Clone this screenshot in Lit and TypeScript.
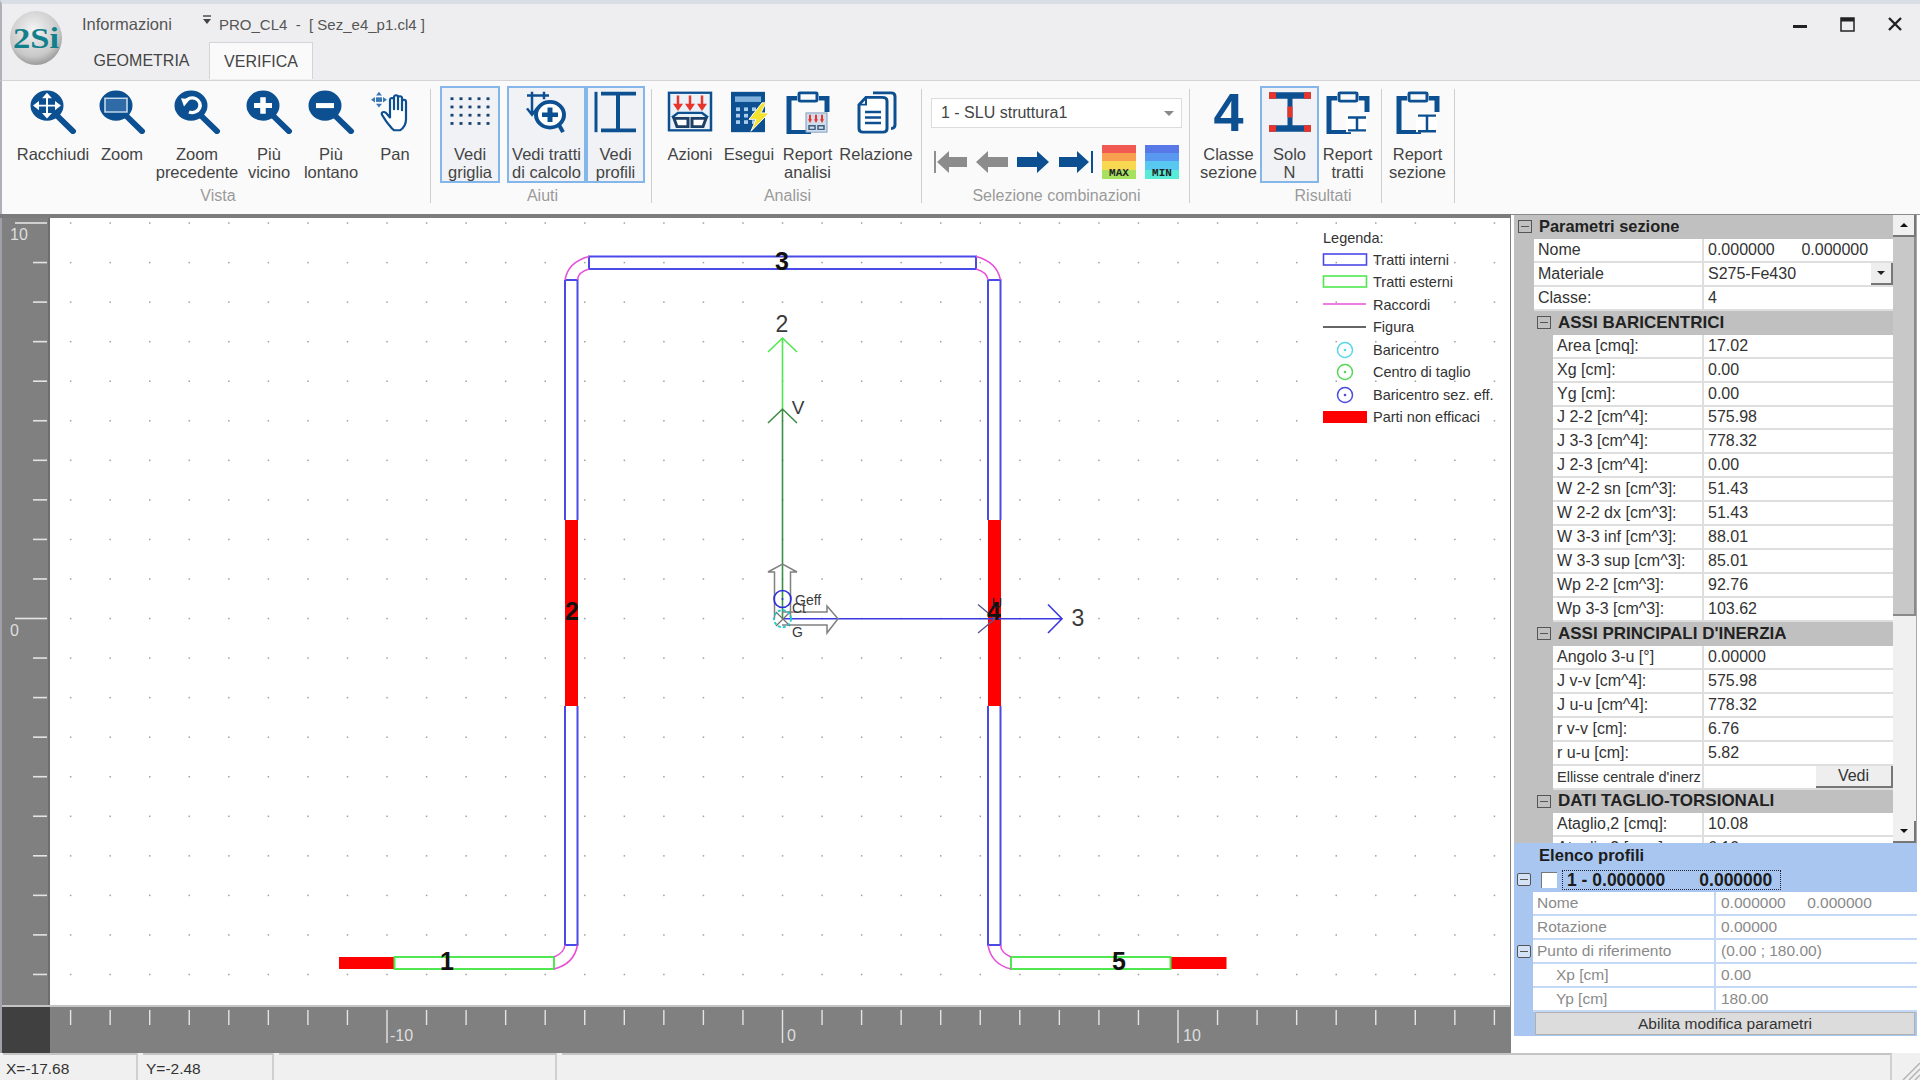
import { LitElement, html, css, svg } from 'lit';
import { customElement } from 'lit/decorators.js';

const BLUE = '#0c5092';
const RED = '#e8352c';

const glass = (inner: unknown) => svg`
  <circle cx="18" cy="17" r="16.5" fill="${BLUE}"/>
  <line x1="29" y1="29" x2="44" y2="45" stroke="${BLUE}" stroke-width="6" stroke-linecap="round"/>
  ${inner}`;

const clipboard = (inner: unknown) => svg`
  <path d="M13 9H5V46H27" fill="none" stroke="${BLUE}" stroke-width="5"/>
  <path d="M35 9H43V24" fill="none" stroke="${BLUE}" stroke-width="5"/>
  <rect x="15" y="3" width="18" height="9" rx="1" fill="none" stroke="${BLUE}" stroke-width="3"/>
  ${inner}`;

const beam = (x: number, y: number, w: number, h: number, color: string) => svg`
  <path d="M${x} ${y}H${x + w}M${x} ${y + h}H${x + w}M${x + w / 2} ${y}V${y + h}" fill="none" stroke="${color}" stroke-width="2.5"/>`;

const ICONS: Record<string, unknown> = {
  fit: glass(svg`
    <path d="M18 6V28M7 17H29" stroke="#fff" stroke-width="2"/>
    <path d="M18 3L13 9H23ZM18 31L13 25H23ZM4 17L10 12V22ZM32 17L26 12V22Z" fill="#fff"/>`),
  zoom: glass(svg`<rect x="7" y="9" width="22" height="15" fill="#2f6ba6" stroke="#cfe0f0" stroke-width="1.5"/>`),
  prev: glass(svg`
    <path d="M12 13A8 8 0 1 1 16 24" fill="none" stroke="#fff" stroke-width="3.5"/>
    <path d="M8 9L17 10L11 18Z" fill="#fff"/>`),
  plus: glass(svg`<path d="M18 8V26M9 17H27" stroke="#fff" stroke-width="5.5"/>`),
  minus: glass(svg`<path d="M9 17H27" stroke="#fff" stroke-width="5.5"/>`),
  pan: svg`
    <path d="M21 42C16 36 13 31 11 27C10 24 13 23 15 25L19 30V11C19 8 23 8 23 11V21V8C23 5 27 5 27 8V21V9C27 6 31 6 31 9V22V13C31 10 35 10 35 13V32C35 38 32 42 29 44H23Z" fill="#fff" stroke="${BLUE}" stroke-width="2.2" stroke-linejoin="round"/>
    <path d="M8 2L5 6H11ZM8 19L5 15H11ZM0 10.5L4 7.5V13.5ZM16 10.5L12 7.5V13.5Z" fill="#3a78b5"/>
    <rect x="5" y="8" width="6" height="5" fill="#3a78b5"/>`,
  grid: svg`${[6, 15, 24, 33].map((y) =>
    [6, 15, 24, 33, 42].map((x) => svg`<rect x="${x - 1.5}" y="${y + 2}" width="3" height="3" fill="#17426f"/>`))}`,
  segs: svg`
    <path d="M4 6H26M9 2V10M21 2V10M9 10V26M4 20L9 27L14 20" fill="none" stroke="${BLUE}" stroke-width="2.5"/>
    <circle cx="27" cy="27" r="14" fill="#fff" stroke="${BLUE}" stroke-width="4"/>
    <path d="M27 19V35M19 27H35" stroke="${BLUE}" stroke-width="5"/>
    <line x1="36" y1="38" x2="40" y2="46" stroke="${BLUE}" stroke-width="4"/>`,
  prof: svg`
    <path d="M4 2V46" stroke="${BLUE}" stroke-width="3"/>
    <path d="M9 4H44M9 44H44" stroke="${BLUE}" stroke-width="4"/>
    <path d="M26 4V44" stroke="${BLUE}" stroke-width="4"/>`,
  act: svg`
    <rect x="3" y="3" width="42" height="41" fill="#eaf1f8" stroke="${BLUE}" stroke-width="2.5"/>
    <path d="M12 6V17M24 6V17M36 6V17" stroke="${RED}" stroke-width="2.5"/>
    <path d="M7 15L12 23L17 15ZM19 15L24 23L29 15ZM31 15L36 23L41 15Z" fill="${RED}"/>
    <path d="M6 30L12 25H36L42 30" fill="none" stroke="${BLUE}" stroke-width="2.5"/>
    <path d="M8 31H22V40H11ZM26 31H40L37 40H26Z" fill="#fff" stroke="#1d3f66" stroke-width="3"/>`,
  calc: svg`
    <rect x="6" y="2" width="34" height="44" fill="${BLUE}"/>
    <rect x="10" y="7" width="26" height="6" fill="#7fb0dc"/>
    ${[19, 26, 33].map((y) => [11, 19, 27].map((x) => svg`<rect x="${x}" y="${y}" width="4" height="4" fill="#a9cdee"/>`))}
    <path d="M37 14L24 32H31L26 45L44 25H36L41 14Z" fill="#f4e22f" stroke="#fff" stroke-width="1"/>`,
  rep: clipboard(svg`
    <rect x="22" y="25" width="21" height="21" fill="#cfdded" stroke="#7d9cbc"/>
    <path d="M26 27V33M32 27V33M38 27V33" stroke="${RED}" stroke-width="2"/>
    <path d="M24 32L26 36L28 32ZM30 32L32 36L34 32ZM36 32L38 36L40 32Z" fill="${RED}"/>
    <path d="M25 39H31V43H25ZM34 39H40V43H34Z" fill="none" stroke="#405e80" stroke-width="1.5"/>`),
  doc: svg`
    <path d="M21 3H39Q43 3 43 7V38Q43 42 39 42" fill="none" stroke="${BLUE}" stroke-width="3"/>
    <path d="M14 8H30Q35 8 35 12V42Q35 46 31 46H11Q7 46 7 42V16Z" fill="#fff" stroke="${BLUE}" stroke-width="3"/>
    <path d="M14 8V16H7" fill="none" stroke="${BLUE}" stroke-width="2"/>
    <path d="M13 24H29M13 30H29M13 36H29" stroke="${BLUE}" stroke-width="2.5"/>`,
  soloN: svg`
    <path d="M3 6H45M3 42H45" stroke="${BLUE}" stroke-width="7"/>
    <path d="M24 6V42" stroke="${BLUE}" stroke-width="5"/>
    <path d="M3 6H10M38 6H45M3 42H10M38 42H45" stroke="${RED}" stroke-width="7"/>
    <path d="M24 18V30" stroke="${RED}" stroke-width="5"/>`,
  repT: clipboard(svg`
    <rect x="22" y="25" width="21" height="21" fill="#fff"/>
    ${beam(24, 30, 18, 14, BLUE)}
    <path d="M35 14V22" stroke="#fff" stroke-width="2"/>`),
  repS: clipboard(svg`
    <rect x="22" y="25" width="21" height="21" fill="#fff"/>
    ${beam(24, 28, 18, 17, BLUE)}`),
};

interface RibbonBtn {
  icon?: string;
  lines: string[];
  w: number;
  active?: boolean;
}

const GROUPS: { label: string; w: number; btns: RibbonBtn[] }[] = [
  {
    label: 'Vista',
    w: 410,
    btns: [
      { icon: 'fit', lines: ['Racchiudi'], w: 80 },
      { icon: 'zoom', lines: ['Zoom'], w: 58 },
      { icon: 'prev', lines: ['Zoom', 'precedente'], w: 92 },
      { icon: 'plus', lines: ['Più', 'vicino'], w: 52 },
      { icon: 'minus', lines: ['Più', 'lontano'], w: 72 },
      { icon: 'pan', lines: ['Pan'], w: 56 },
    ],
  },
  {
    label: 'Aiuti',
    w: 205,
    btns: [
      { icon: 'grid', lines: ['Vedi', 'griglia'], w: 60, active: true },
      { lines: [], w: 7 },
      { icon: 'segs', lines: ['Vedi tratti', 'di calcolo'], w: 79, active: true },
      { icon: 'prof', lines: ['Vedi', 'profili'], w: 59, active: true },
    ],
  },
  {
    label: 'Analisi',
    w: 255,
    btns: [
      { icon: 'act', lines: ['Azioni'], w: 60 },
      { icon: 'calc', lines: ['Esegui'], w: 58 },
      { icon: 'rep', lines: ['Report', 'analisi'], w: 59 },
      { icon: 'doc', lines: ['Relazione'], w: 78 },
    ],
  },
];

const RESULT_BTNS: RibbonBtn[] = [
  { icon: 'soloN', lines: ['Solo', 'N'], w: 59, active: true },
  { icon: 'repT', lines: ['Report', 'tratti'], w: 57 },
];

type Row =
  | { head: string; level: 0 | 1 }
  | { name: string; value: string; level: 0 | 1; combo?: boolean; button?: boolean };

const ROWS: Row[] = [
  { head: 'Parametri sezione', level: 0 },
  { name: 'Nome', value: '0.000000\u00a0\u00a0\u00a0\u00a0\u00a0\u00a00.000000', level: 0 },
  { name: 'Materiale', value: 'S275-Fe430', level: 0, combo: true },
  { name: 'Classe:', value: '4', level: 0 },
  { head: 'ASSI BARICENTRICI', level: 1 },
  { name: 'Area [cmq]:', value: '17.02', level: 1 },
  { name: 'Xg [cm]:', value: '0.00', level: 1 },
  { name: 'Yg [cm]:', value: '0.00', level: 1 },
  { name: 'J 2-2 [cm^4]:', value: '575.98', level: 1 },
  { name: 'J 3-3 [cm^4]:', value: '778.32', level: 1 },
  { name: 'J 2-3 [cm^4]:', value: '0.00', level: 1 },
  { name: 'W 2-2 sn [cm^3]:', value: '51.43', level: 1 },
  { name: 'W 2-2 dx [cm^3]:', value: '51.43', level: 1 },
  { name: 'W 3-3 inf [cm^3]:', value: '88.01', level: 1 },
  { name: 'W 3-3 sup [cm^3]:', value: '85.01', level: 1 },
  { name: 'Wp 2-2 [cm^3]:', value: '92.76', level: 1 },
  { name: 'Wp 3-3 [cm^3]:', value: '103.62', level: 1 },
  { head: "ASSI PRINCIPALI D'INERZIA", level: 1 },
  { name: 'Angolo 3-u [°]', value: '0.00000', level: 1 },
  { name: 'J v-v [cm^4]:', value: '575.98', level: 1 },
  { name: 'J u-u [cm^4]:', value: '778.32', level: 1 },
  { name: 'r v-v [cm]:', value: '6.76', level: 1 },
  { name: 'r u-u [cm]:', value: '5.82', level: 1 },
  { name: "Ellisse centrale d'inerz", value: '', level: 1, button: true },
  { head: 'DATI TAGLIO-TORSIONALI', level: 1 },
  { name: 'Ataglio,2 [cmq]:', value: '10.08', level: 1 },
  { name: 'Ataglio,3 [cmq]:', value: '6.10', level: 1 },
];

const PROFILE_ROWS = [
  { name: 'Nome', value: '0.000000\u00a0\u00a0\u00a0\u00a0\u00a00.000000' },
  { name: 'Rotazione', value: '0.00000' },
  { name: 'Punto di riferimento', value: '(0.00 ; 180.00)', toggle: true },
  { name: 'Xp [cm]', value: '0.00', indent: true },
  { name: 'Yp [cm]', value: '180.00', indent: true },
];

// drawing scale: 39.55 px per unit, origin in page coordinates
const OX = 782.5;
const OY = 618.5;
const STEP = 39.55;
const range = (a: number, b: number) => Array.from({ length: b - a + 1 }, (_, i) => a + i);

const FONT = 'Liberation Sans';

function drawing() {
  const dots = range(-18, 18).flatMap((i) =>
    range(-10, 9).map((j) => svg`<rect x="${OX + i * STEP - 0.7}" y="${OY + j * STEP - 0.7}" width="1.5" height="1.5" fill="#a0a0a0"/>`)
  );
  const leftTicks = range(-10, 9).map((j) => {
    const long = j % 10 === 0;
    return svg`<line x1="${long ? 15 : 33}" x2="47" y1="${OY + j * STEP}" y2="${OY + j * STEP}" stroke="#e4e4e4" stroke-width="1.6"/>`;
  });
  const bottomTicks = range(-18, 18).map((i) => {
    const long = i % 10 === 0;
    return svg`<line x1="${OX + i * STEP}" x2="${OX + i * STEP}" y1="1010" y2="${long ? 1043 : 1025}" stroke="#e4e4e4" stroke-width="1.4"/>`;
  });
  const purple = '#4a4ae8';
  const green = '#50e850';
  const mag = '#e850d8';
  const lab = (x: number, y: number, t: string) =>
    svg`<text x="${x}" y="${y}" text-anchor="middle" font-family="${FONT}" font-size="25" font-weight="700" fill="#111">${t}</text>`;
  const axisLab = (x: number, y: number, t: string, size = 23) =>
    svg`<text x="${x}" y="${y}" text-anchor="middle" font-family="${FONT}" font-size="${size}" fill="#3a3a3a">${t}</text>`;
  const legendText = [
    ['Tratti interni', 260],
    ['Tratti esterni', 282],
    ['Raccordi', 305],
    ['Figura', 327],
    ['Baricentro', 350],
    ['Centro di taglio', 372],
    ['Baricentro sez. eff.', 395],
    ['Parti non efficaci', 417],
  ] as [string, number][];
  const target = (y: number, c: string) => svg`
    <circle cx="1345" cy="${y}" r="7.5" fill="none" stroke="${c}" stroke-width="1.5"/>
    <circle cx="1345" cy="${y}" r="1.3" fill="${c}"/>`;

  return svg`
    <rect x="0" y="216" width="1511" height="837" fill="#fff"/>
    ${dots}

    <rect x="2" y="216" width="48" height="790" fill="#808080"/>
    <rect x="48" y="216" width="2" height="790" fill="#6e6e6e"/>
    <rect x="0" y="216" width="2" height="837" fill="#a0a0a8"/>
    <rect x="2" y="1005" width="1508" height="2" fill="#c4c4c4"/>
    <rect x="50" y="1007" width="1460" height="46" fill="#808080"/>
    <rect x="2" y="1007" width="48" height="46" fill="#404040"/>
    <rect x="1510" y="216" width="1.5" height="837" fill="#808080"/>
    ${leftTicks}
    ${bottomTicks}
    <g font-family="${FONT}" font-size="16" fill="#dedede">
      <text x="10" y="240">10</text>
      <text x="10" y="636">0</text>
      <text x="390" y="1041">-10</text>
      <text x="787" y="1041">0</text>
      <text x="1183" y="1041">10</text>
    </g>

    <rect x="339" y="957" width="56" height="12" fill="#ff0000"/>
    <rect x="1170.5" y="957" width="56" height="12" fill="#ff0000"/>
    <rect x="565" y="520" width="13" height="186" fill="#ff0000"/>
    <rect x="988" y="520" width="13" height="186" fill="#ff0000"/>

    <g fill="none" stroke-width="2">
      <rect x="394.5" y="957" width="159.5" height="12" stroke="${green}"/>
      <rect x="1011" y="957" width="159.5" height="12" stroke="${green}"/>
      <rect x="589" y="256.5" width="387" height="12.5" stroke="${purple}"/>
      <path d="M565 280H577.5V520M565 280V520M577.5 706V945H565V706" stroke="${purple}"/>
      <path d="M988 280H1000.5V520M988 280V520M1000.5 706V945H988V706" stroke="${purple}"/>
      <path d="M565 280Q568 262 589 256.5M577.5 280Q578 272 589 269M1000.5 280Q997 262 976 256.5M988 280Q987 272 976 269
               M577.5 945Q574 964 554 969M565 945Q564 953 554 957M988 945Q991 964 1011 969M1000.5 945Q1001 953 1011 957"
        stroke="${mag}" stroke-width="1.6"/>
    </g>

    <path d="M782.5 409V338M768 352L782.5 338L797 352" fill="none" stroke="${green}" stroke-width="1.6"/>
    <path d="M782.5 618V409M768 423L782.5 409L797 423" fill="none" stroke="#3d8f46" stroke-width="1.6"/>
    <path d="M782.5 618.7H1062M1048 604.5L1062 618.7L1048 633" fill="none" stroke="#3a3ae0" stroke-width="1.6"/>
    <path d="M978 604.5L995 618.7L978 633" fill="none" stroke="#5a5a90" stroke-width="1.4"/>
    <path d="M774.5 618V572H768L782.5 564L797 572H790.5V618" fill="none" stroke="#808080" stroke-width="1.5"/>
    <path d="M782 612H827V606L838 618.7L827 633V625H782" fill="none" stroke="#808080" stroke-width="1.5"/>
    <path d="M776 612L790 626M790 612L776 626" stroke="#707070" stroke-width="1.2"/>
    <circle cx="782.5" cy="599" r="8.5" fill="none" stroke="#2a2ae0" stroke-width="1.6"/>
    <circle cx="782.5" cy="599" r="1" fill="#2a2ae0"/>
    <circle cx="782.5" cy="618.7" r="8.5" fill="none" stroke="#20c8c8" stroke-width="1.8" stroke-dasharray="3 2"/>
    ${lab(782, 270, '3')}
    ${lab(572, 620, '2')}
    ${lab(994, 620, '4')}
    ${lab(447, 970, '1')}
    ${lab(1119, 970, '5')}
    <text x="997" y="608" text-anchor="middle" font-family="${FONT}" font-size="15" fill="#222">U</text>
    ${axisLab(782, 332, '2')}
    ${axisLab(798, 414, 'V', 19)}
    ${axisLab(1078, 626, '3')}
    <g font-family="${FONT}" font-size="14" fill="#3a3a3a">
      <text x="795" y="605">Geff</text>
      <text x="792" y="613">Ct</text>
      <text x="792" y="637">G</text>
    </g>

    <g font-family="${FONT}" font-size="14.5" fill="#333">
      <text x="1323" y="243">Legenda:</text>
      ${legendText.map(([t, y]) => svg`<text x="1373" y="${y + 5}">${t}</text>`)}
    </g>
    <rect x="1323.5" y="254" width="43" height="11" fill="none" stroke="${purple}" stroke-width="1.6"/>
    <rect x="1323.5" y="276" width="43" height="11" fill="none" stroke="${green}" stroke-width="1.6"/>
    <line x1="1323" x2="1366" y1="304" y2="304" stroke="${mag}" stroke-width="1.6"/>
    <line x1="1323" x2="1366" y1="327" y2="327" stroke="#333" stroke-width="1.4"/>
    ${target(350, '#55d8e8')}
    ${target(372, '#55d855')}
    ${target(395, '#4a4ae0')}
    <rect x="1323" y="411" width="44" height="12" fill="#ff0000"/>
  `;
}

@customElement('app-root')
export class AppRoot extends LitElement {
  static styles = css`
    :host {
      display: flex;
      flex-direction: column;
      position: relative;
      width: 1920px;
      height: 1080px;
      overflow: hidden;
      background: #f0f0f0;
      font-family: 'Liberation Sans', Arial, sans-serif;
      color: #333;
    }

    /* title area */
    .title {
      flex: 0 0 80px;
      box-sizing: border-box;
      display: flex;
      flex-direction: column;
      background: #eeeef0;
      border-top: 4px solid #d9dde6;
      border-bottom: 1px solid #d4d4d6;
      border-left: 2px solid #b0b0b8;
    }
    .title-top {
      flex: 0 0 38px;
      box-sizing: border-box;
      display: flex;
      align-items: center;
      font-size: 15px;
      color: #555;
      padding: 2px 0 0 80px;
    }
    .logo {
      position: absolute;
      left: 8px;
      top: 8px;
      width: 56px;
      height: 60px;
    }
    .info {
      width: 119px;
      font-size: 16.5px;
    }
    .qat {
      display: block;
      width: 18px;
      height: 12px;
      margin-top: -6px;
    }
    .doc-name {
      flex: 1;
    }
    .win {
      display: flex;
      align-items: center;
      padding-right: 18px;
    }
    .win svg {
      display: block;
    }
    .win svg + svg {
      margin-left: 33px;
    }
    .tabs {
      flex: 1;
      display: flex;
      font-size: 16px;
      color: #444;
      padding-left: 72px;
    }
    .tab {
      box-sizing: border-box;
      width: 135px;
      text-align: center;
      line-height: 38px;
    }
    .tab.on {
      width: 104px;
      background: #fafafa;
      border: 1px solid #d4d4d6;
      border-bottom: none;
      height: 37px;
    }

    /* ribbon */
    .ribbon {
      flex: 0 0 133px;
      box-sizing: border-box;
      display: flex;
      background: #fafafa;
      padding: 5px 0 0 11px;
      border-left: 2px solid #b0b0b8;
    }
    .group {
      display: flex;
      flex-direction: column;
      align-items: stretch;
      flex: none;
    }
    .btns {
      display: flex;
      height: 97px;
    }
    .glabel {
      text-align: center;
      font-size: 16px;
      line-height: 25px;
      color: #9a9a9a;
    }
    .sep {
      flex: none;
      width: 1px;
      height: 114px;
      margin-top: 3px;
      background: #cfcfcf;
    }
    .btn {
      box-sizing: border-box;
      flex: none;
      display: flex;
      flex-direction: column;
      align-items: center;
      font-size: 16.5px;
      line-height: 18px;
      color: #444;
      border: 2px solid transparent;
      padding-top: 2px;
      white-space: nowrap;
    }
    .btn.on {
      background: #f0f2f6;
      border-color: #84b6ea;
    }
    .btn svg {
      flex: 0 0 44px;
      width: 48px;
      height: 44px;
      margin-bottom: 11px;
    }
    .btn.blank {
      border: none;
    }
    .big4 {
      flex: 0 0 44px;
      font-size: 54px;
      line-height: 44px;
      font-weight: 700;
      color: #0c5092;
      margin-bottom: 11px;
    }
    .sel {
      width: 251px;
      padding-top: 12px;
    }
    .combo {
      box-sizing: border-box;
      height: 30px;
      background: #fff;
      border: 1px solid #dcdcdc;
      display: flex;
      align-items: center;
      justify-content: space-between;
      padding: 0 7px 0 9px;
      font-size: 16px;
      color: #444;
    }
    .caret {
      width: 0;
      height: 0;
      border: 5px solid transparent;
      border-top: 5px solid #888;
      margin-top: 5px;
    }
    .nav {
      display: flex;
      align-items: center;
      justify-content: space-between;
      margin-top: 17px;
      height: 33px;
      padding: 0 3px;
    }
    .nav svg {
      display: block;
    }

    /* main */
    .main {
      flex: 0 0 839px;
      display: flex;
      min-height: 0;
    }
    .canvas-wrap {
      flex: 0 0 1511px;
      box-sizing: border-box;
      border-top: 4px solid #7c7c7c;
      background: #fff;
    }
    .canvas {
      display: block;
    }
    .panel {
      flex: 1;
      display: flex;
      flex-direction: column;
      background: #fff;
      padding: 0 3px;
      font-size: 16px;
      min-width: 0;
      border-top: 1px solid #8a8a8a;
    }

    /* property grid */
    .props {
      flex: 0 0 628px;
      display: flex;
      overflow: hidden;
    }
    .list {
      flex: 1;
      overflow: hidden;
      background: #c0c0c0;
      min-width: 0;
    }
    .row {
      display: flex;
      height: 23.94px;
      box-sizing: border-box;
      align-items: center;
      white-space: nowrap;
    }
    .row.head {
      font-weight: 700;
      color: #222;
      font-size: 17px;
    }
    .row.head.l0 {
      padding-left: 4px;
      font-size: 16.4px;
    }
    .row.head.l1 {
      padding-left: 23px;
    }
    .row.head b {
      margin-left: 7px;
    }
    .row.item.l0 {
      padding-left: 20px;
    }
    .row.item.l1 {
      padding-left: 39px;
    }
    .cell {
      box-sizing: border-box;
      height: 100%;
      background: #fff;
      border-bottom: 2px solid #dedede;
      display: flex;
      align-items: center;
      overflow: hidden;
      padding-left: 4px;
    }
    .cell.name {
      border-right: 2px solid #dedede;
    }
    .cell.name.tight {
      font-size: 14.5px;
    }
    .l0 .cell.name {
      width: 170px;
    }
    .l1 .cell.name {
      width: 151px;
    }
    .cell.val {
      flex: 1;
      justify-content: space-between;
      padding-left: 4px;
    }
    .drop {
      box-sizing: border-box;
      width: 22px;
      height: 22px;
      background: #eee;
      border-right: 2px solid #777;
      border-bottom: 2px solid #777;
      display: flex;
      align-items: center;
      justify-content: center;
    }
    .drop i,
    .sb i {
      display: block;
      width: 0;
      height: 0;
      border: 4px solid transparent;
    }
    .drop i {
      border-top-color: #222;
      margin-top: 4px;
    }
    .see {
      box-sizing: border-box;
      margin-left: auto;
      width: 77px;
      height: 22px;
      line-height: 20px;
      text-align: center;
      background: #eee;
      border-right: 2px solid #777;
      border-bottom: 2px solid #777;
    }
    .tg {
      box-sizing: border-box;
      flex: none;
      width: 14px;
      height: 13px;
      border: 1px solid #555;
      position: relative;
      background: transparent;
    }
    .tg::after {
      content: '';
      position: absolute;
      left: 2px;
      right: 2px;
      top: 5px;
      height: 1px;
      background: #555;
    }

    /* scrollbar */
    .sb {
      flex: 0 0 24px;
      display: flex;
      flex-direction: column;
      background: #f0f0f0;
      border-right: 1px solid #a8a8a8;
      box-sizing: border-box;
    }
    .sb-btn {
      box-sizing: border-box;
      flex: 0 0 22px;
      background: #f0f0f0;
      border-right: 2px solid #777;
      border-bottom: 2px solid #777;
      display: flex;
      align-items: center;
      justify-content: center;
    }
    .sb-up i {
      border-bottom-color: #111;
      margin-top: -4px;
    }
    .sb-down i {
      border-top-color: #111;
      margin-top: 4px;
    }
    .thumb {
      flex: 0 0 379px;
      background: #c8c8c8;
      border-right: 2px solid #8a8a8a;
      border-bottom: 2px solid #8a8a8a;
      box-sizing: border-box;
    }
    .track {
      flex: 1;
    }

    /* profile list */
    .profiles {
      flex: 0 0 193px;
      box-sizing: border-box;
      background: #a8c6f0;
      font-size: 15.5px;
    }
    .p-head {
      height: 25px;
      line-height: 25px;
      font-weight: 700;
      font-size: 16.6px;
      color: #1c1c1c;
      padding-left: 25px;
    }
    .p-row {
      display: flex;
      align-items: center;
      height: 24px;
      position: relative;
      padding-left: 19px;
      box-sizing: border-box;
    }
    .p-row.top {
      padding-left: 4px;
      font-weight: 700;
      font-size: 17.5px;
      color: #1c1c1c;
    }
    .chk {
      flex: none;
      width: 15px;
      height: 15px;
      background: #fff;
      margin: 0 5px 0 23px;
      border-left: 1px solid #777;
      border-top: 1px solid #777;
    }
    .focus {
      box-sizing: border-box;
      width: 219px;
      height: 20px;
      line-height: 18px;
      padding: 0 4px;
      border: 1px dotted #223;
      white-space: nowrap;
      overflow: hidden;
    }
    .p-row .tg {
      position: absolute;
      left: 3px;
      top: 5px;
      background: #d4e2f6;
      border-radius: 2px;
    }
    .p-name,
    .p-val {
      box-sizing: border-box;
      height: 100%;
      background: #fff;
      color: #8a8a8a;
      display: flex;
      align-items: center;
      border-bottom: 2px solid #c4d9f6;
      padding-left: 4px;
      white-space: nowrap;
    }
    .p-name {
      width: 183px;
      border-right: 2px solid #c4d9f6;
    }
    .p-name.indent {
      padding-left: 23px;
    }
    .p-val {
      flex: 1;
      padding-left: 5px;
    }
    .enable {
      box-sizing: border-box;
      height: 23px;
      margin: 0 2px 0 21px;
      line-height: 21px;
      text-align: center;
      background: #dcdcdc;
      border: 1px solid #b0b0b0;
      color: #333;
    }

    /* status bar */
    .status {
      flex: 0 0 28px;
      box-sizing: border-box;
      display: flex;
      background: #f0f0f0;
      padding-left: 3px;
      font-size: 15.5px;
      gap: 5px;
      overflow: hidden;
    }
    .st {
      box-sizing: border-box;
      flex: none;
      height: 100%;
      line-height: 27px;
      border-top: 2px solid #c4c4c4;
      border-right: 2px solid #d0d0d0;
      padding-left: 3px;
      background: #f0f0f0;
    }
    .grip {
      flex: 1;
      display: flex;
      justify-content: flex-end;
      align-items: flex-end;
    }
  `;

  private renderBtn(b: RibbonBtn) {
    if (!b.icon) return html`<div class="btn blank" style="width:${b.w}px"></div>`;
    return html`
      <div class="btn ${b.active ? 'on' : ''}" style="width:${b.w}px">
        <svg viewBox="0 0 48 48" preserveAspectRatio="none">${ICONS[b.icon]}</svg>
        ${b.lines.map((l) => html`<span>${l}</span>`)}
      </div>
    `;
  }

  private renderRow(r: Row) {
    if ('head' in r) {
      return html`<div class="row head l${r.level}"><span class="tg"></span><b>${r.head}</b></div>`;
    }
    return html`
      <div class="row item l${r.level}">
        <div class="cell name ${r.button ? 'tight' : ''}">${r.name}</div>
        <div class="cell val">
          <span>${r.value}</span>
          ${r.combo ? html`<span class="drop"><i></i></span>` : ''}
          ${r.button ? html`<span class="see">Vedi</span>` : ''}
        </div>
      </div>
    `;
  }

  render() {
    return html`
      <div class="title">
        <div class="title-top">
          <svg class="logo" viewBox="0 0 56 60">
            <defs>
              <radialGradient id="lg" cx="45%" cy="35%" r="70%">
                <stop offset="0" stop-color="#f4f4f4"/>
                <stop offset="0.7" stop-color="#c8c8c8"/>
                <stop offset="1" stop-color="#8d8d8d"/>
              </radialGradient>
            </defs>
            <ellipse cx="28" cy="30" rx="26" ry="27" fill="url(#lg)"/>
            <text x="28" y="40" text-anchor="middle" font-family="Liberation Serif" font-weight="700" font-size="30" fill="#12808c" textLength="46" lengthAdjust="spacingAndGlyphs">2Si</text>
          </svg>
          <span class="info">Informazioni</span>
          <svg class="qat" viewBox="0 0 18 12"><path d="M2 1H10" stroke="#444" stroke-width="1.4"/><path d="M2 4H10L6 9Z" fill="#444"/></svg>
          <span class="doc-name">PRO_CL4&nbsp; -&nbsp; [ Sez_e4_p1.cl4 ]</span>
          <div class="win">
            <svg width="14" height="14" viewBox="0 0 14 14"><rect y="8" width="14" height="3" fill="#222"/></svg>
            <svg width="15" height="15" viewBox="0 0 15 15"><rect x="1" y="1" width="13" height="13" fill="none" stroke="#222" stroke-width="1.5"/><rect x="1" y="1" width="13" height="3.5" fill="#222"/></svg>
            <svg width="14" height="14" viewBox="0 0 14 14"><path d="M1 1L13 13M13 1L1 13" stroke="#222" stroke-width="2.4"/></svg>
          </div>
        </div>
        <div class="tabs">
          <div class="tab">GEOMETRIA</div>
          <div class="tab on">VERIFICA</div>
        </div>
      </div>

      <div class="ribbon">
        ${GROUPS.map(
          (g, i) => html`
            <div class="group" style="width:${g.w}px">
              <div class="btns">${g.btns.map((b) => this.renderBtn(b))}</div>
              <div class="glabel">${g.label}</div>
            </div>
            <div class="sep" style="margin-left:${[7, 6, 6][i]}px;margin-right:${[9, 8, 9][i]}px"></div>
          `
        )}
        <div class="group" style="width:251px">
          <div class="btns">
            <div class="sel">
              <div class="combo">1 - SLU struttura1<span class="caret"></span></div>
              <div class="nav">
                <svg width="33" height="24" viewBox="0 0 33 24"><path d="M1 1V23" stroke="#909090" stroke-width="2"/><path d="M3 12L15 1V7H33V17H15V23Z" fill="#8c8c8c"/></svg>
                <svg width="32" height="24" viewBox="0 0 32 24"><path d="M0 12L12 1V7H32V17H12V23Z" fill="#8c8c8c"/></svg>
                <svg width="32" height="24" viewBox="0 0 32 24"><path d="M32 12L20 1V7H0V17H20V23Z" fill="${BLUE}"/></svg>
                <svg width="34" height="24" viewBox="0 0 34 24"><path d="M30 12L18 1V7H0V17H18V23Z" fill="${BLUE}"/><path d="M33 1V23" stroke="${BLUE}" stroke-width="2"/></svg>
                <svg width="34" height="34" viewBox="0 0 34 34">
                  <rect width="34" height="8" fill="#f05a52"/><rect y="8" width="34" height="8" fill="#f8a050"/><rect y="16" width="34" height="9" fill="#f8d850"/><rect y="25" width="34" height="9" fill="#a8e060"/>
                  <text x="17" y="31" text-anchor="middle" font-family="Liberation Mono" font-weight="700" font-size="11" fill="#222">MAX</text>
                </svg>
                <svg width="34" height="34" viewBox="0 0 34 34">
                  <rect width="34" height="8" fill="#5878e8"/><rect y="8" width="34" height="8" fill="#5898f0"/><rect y="16" width="34" height="9" fill="#58c8f0"/><rect y="25" width="34" height="9" fill="#58ecd8"/>
                  <text x="17" y="31" text-anchor="middle" font-family="Liberation Mono" font-weight="700" font-size="11" fill="#222">MIN</text>
                </svg>
              </div>
            </div>
          </div>
          <div class="glabel">Selezione combinazioni</div>
        </div>
        <div class="sep" style="margin-left:7px;margin-right:7px"></div>
        <div class="group" style="width:252px">
          <div class="btns">
            <div class="btn" style="width:63px">
              <div class="big4">4</div>
              <span>Classe</span><span>sezione</span>
            </div>
            ${RESULT_BTNS.map((b) => this.renderBtn(b))}
            <div class="sep" style="margin:3px 3px 0 5px"></div>
            ${this.renderBtn({ icon: 'repS', lines: ['Report', 'sezione'], w: 65 })}
          </div>
          <div class="glabel">Risultati</div>
        </div>
        <div class="sep" style="margin-left:5px"></div>
      </div>

      <div class="main">
        <div class="canvas-wrap">
          <svg class="canvas" width="1511" height="835" viewBox="0 218 1511 835">${drawing()}</svg>
        </div>
        <div class="panel">
          <div class="props">
            <div class="list">${ROWS.map((r) => this.renderRow(r))}</div>
            <div class="sb">
              <div class="sb-btn sb-up"><i></i></div>
              <div class="thumb"></div>
              <div class="track"></div>
              <div class="sb-btn sb-down"><i></i></div>
            </div>
          </div>
          <div class="profiles">
            <div class="p-head">Elenco profili</div>
            <div class="p-row top">
              <span class="tg"></span>
              <span class="chk"></span>
              <span class="focus">1 - 0.000000&nbsp;&nbsp;&nbsp;&nbsp;&nbsp;&nbsp;&nbsp;0.000000</span>
            </div>
            ${PROFILE_ROWS.map(
              (p) => html`
                <div class="p-row">
                  ${p.toggle ? html`<span class="tg"></span>` : ''}
                  <div class="p-name ${p.indent ? 'indent' : ''}">${p.name}</div>
                  <div class="p-val">${p.value}</div>
                </div>
              `
            )}
            <div class="enable">Abilita modifica parametri</div>
          </div>
        </div>
      </div>

      <div class="status">
        <div class="st" style="width:135px">X=-17.68</div>
        <div class="st" style="width:131px">Y=-2.48</div>
        <div class="st" style="width:278px"></div>
        <div class="st" style="width:1330px"></div>
        <div class="grip">
          <svg width="24" height="24" viewBox="0 0 24 24"><path d="M23 6L6 23M23 12L12 23M23 18L18 23" stroke="#b4b4b4" stroke-width="1.5"/></svg>
        </div>
      </div>
    `;
  }
}
